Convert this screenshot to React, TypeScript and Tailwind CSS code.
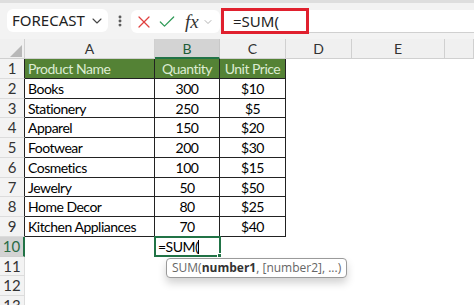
import { Check, ChevronDown, EllipsisVertical, X } from 'lucide-react'
import React from 'react'

const rows = [
  ['Product Name', 'Quantity', 'Unit Price'],
  ['Books', '300', '$10'],
  ['Stationery', '250', '$5'],
  ['Apparel', '150', '$20'],
  ['Footwear', '200', '$30'],
  ['Cosmetics', '100', '$15'],
  ['Jewelry', '50', '$50'],
  ['Home Decor', '80', '$25'],
  ['Kitchen Appliances', '70', '$40'],
]

const cellFont = { fontFamily: 'Lato, "Liberation Sans", sans-serif' }

const FormulaBar = () => (
  <div className="flex h-[39px] border-t-[3px] border-[#dedede] bg-[#f3f3f3]">
    <div className="ml-[7px] mt-[6px] flex h-[23px] w-[101px] items-center justify-between rounded-md bg-white pl-[5px] pr-[3px]">
      <span className="text-[15px] text-[#222]" style={{ fontFamily: '"Noto Sans", sans-serif' }}>
        FORECAST
      </span>
      <ChevronDown size={16} strokeWidth={1.6} className="text-[#444]" />
    </div>
    <div className="ml-[5px] mt-[11px] text-[#555]">
      <EllipsisVertical size={14} strokeWidth={3} />
    </div>
    <div className="ml-[4px] mt-[7px] flex h-[23px] w-[89px] items-center rounded-md bg-white pl-[3px]">
      <X size={20} strokeWidth={1.5} className="text-[#e0403f]" />
      <Check size={20} strokeWidth={1.5} className="ml-[3px] text-[#2f9a57]" />
      <span
        className="ml-[8px] text-[19px] italic leading-none text-[#333]"
        style={{ fontFamily: '"Liberation Serif", serif' }}
      >
        fx
      </span>
      <ChevronDown size={12} strokeWidth={1.5} className="ml-[3px] mt-[1px] text-[#999]" />
    </div>
    <div className="relative ml-[1px] mt-[7px] h-[23px] flex-1 rounded-l-md border-b border-[#d0d0d0] bg-white">
      <div className="absolute left-0 top-[-2px] flex h-[26px] w-[88px] items-center border-[3px] border-[#e0202e] pl-[9px]">
        <span className="text-[15px] text-[#222]" style={{ fontFamily: '"Noto Sans", sans-serif' }}>
          =SUM(
        </span>
      </div>
    </div>
  </div>
)

const colWidths = ['w-[130px]', 'w-[65px]', 'w-[66px]', 'w-[66px]', 'w-[93px]', 'flex-1']
const letters = ['A', 'B', 'C', 'D', 'E', '']

const ColumnHeader = () => (
  <div className="flex h-[20px] bg-[#f0f0f0]">
    <div className="relative w-[25px] border-b border-r border-[#d0d0d0]">
      <svg width="25" height="20" className="absolute left-0 top-0">
        <polygon points="10,18 22,18 22,6" fill="#b8b8b8" />
      </svg>
    </div>
    {letters.map((l, i) => (
      <div
        key={i}
        className={`${colWidths[i]} flex items-center justify-center text-[14px] ${
          i === 1
            ? 'border-b-2 border-r border-b-[#217346] border-r-[#c8c8c8] bg-[#d3d3d3] text-[#1e5c38]'
            : 'border-b border-r border-[#d0d0d0] text-[#333]'
        }`}
        style={cellFont}
      >
        {l}
      </div>
    ))}
  </div>
)

const RowHead = ({ n }: { n: number }) => {
  const active = n === 10
  return (
    <div
      className={`flex w-[25px] items-center justify-center text-[15px] ${
        active
          ? 'border-r-2 border-b border-r-[#217346] border-b-[#d0d0d0] bg-[#d3d3d3] text-[#2b6b45]'
          : n <= 9
            ? 'border-b border-r border-b-[#dcdcdc] border-r-[#222] bg-[#f3f3f3] text-[#333]'
            : 'border-b border-r border-[#dcdcdc] bg-[#f3f3f3] text-[#333]'
      }`}
      style={cellFont}
    >
      {n}
    </div>
  )
}

const cellText = 'text-[14px] leading-[19px] tracking-[-0.5px]'

export default function App() {
  return (
    <div className="h-[305px] w-[474px] overflow-hidden bg-white">
      <FormulaBar />
      <ColumnHeader />
      <div className="relative flex flex-col">
        {Array.from({ length: 13 }, (_, idx) => {
          const n = idx + 1
          const data = rows[idx]
          return (
            <div key={n} className="flex h-[19.75px]">
              <RowHead n={n} />
              {data ? (
                <>
                  <div
                    className={`w-[130px] truncate border-b border-r border-[#222] pl-[3px] ${cellText} ${
                      n === 1 ? 'bg-[#548235] text-[#dcecd2]' : 'text-black'
                    }`}
                    style={cellFont}
                  >
                    {data[0]}
                  </div>
                  <div
                    className={`w-[65px] border-b border-r border-[#222] text-center ${cellText} ${
                      n === 1 ? 'bg-[#548235] text-[#dcecd2]' : 'text-black'
                    }`}
                    style={cellFont}
                  >
                    {data[1]}
                  </div>
                  <div
                    className={`w-[66px] border-b border-r border-[#222] text-center ${cellText} ${
                      n === 1 ? 'bg-[#548235] text-[#dcecd2]' : 'text-black'
                    }`}
                    style={cellFont}
                  >
                    {data[2]}
                  </div>
                </>
              ) : (
                <>
                  <div className="w-[130px]" />
                  {n === 10 ? (
                    <div
                      className={`relative -ml-px -mt-px h-[21px] w-[67px] border-2 border-[#217346] pl-[2px] text-[14px] leading-[17px] tracking-[-0.5px] text-black`}
                      style={cellFont}
                    >
                      =SUM(<span className="inline-block h-[14px] w-px translate-y-[2px] bg-black" />
                      <span className="absolute bottom-[-3px] right-[-3px] h-[5px] w-[5px] border border-white bg-[#217346]" />
                    </div>
                  ) : (
                    <div className="w-[65px]" />
                  )}
                  <div className="w-[66px]" />
                </>
              )}
            </div>
          )
        })}
        <div
          className="absolute left-[166px] top-[199px] flex h-[20px] items-center rounded-[4px] border border-[#9a9a9a] bg-white px-[5px] text-[12px] text-[#666] shadow-[0_5px_8px_rgba(0,0,0,0.18)]"
          style={{ fontFamily: '"Open Sans", sans-serif' }}
        >
          SUM(<span className="font-bold text-[#333]">number1</span>, [number2], ...)
        </div>
      </div>
    </div>
  )
}
